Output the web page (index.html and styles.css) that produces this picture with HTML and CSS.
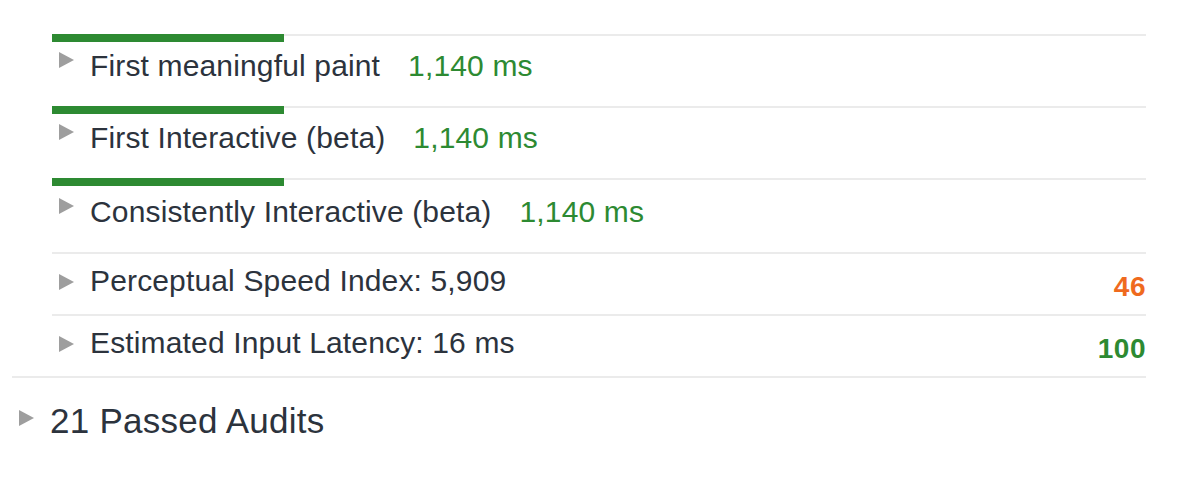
FILE: index.html
```html
<!DOCTYPE html>
<html lang="en">
<head>
<meta charset="utf-8">
<title>Audits</title>
<link rel="stylesheet" href="styles.css">
</head>
<body>
<div class="page">
  <div class="group">
    <div class="audit audit--bar">
      <div class="bar"></div>
      <div class="audit__line">
        <svg class="tri" width="15" height="16" viewBox="0 0 15 16"><polygon points="0,0 15,8 0,16"/></svg>
        <span class="audit__title">First meaningful paint</span>
        <span class="audit__value">1,140 ms</span>
      </div>
    </div>
    <div class="audit audit--bar">
      <div class="bar"></div>
      <div class="audit__line">
        <svg class="tri" width="15" height="16" viewBox="0 0 15 16"><polygon points="0,0 15,8 0,16"/></svg>
        <span class="audit__title">First Interactive (beta)</span>
        <span class="audit__value">1,140 ms</span>
      </div>
    </div>
    <div class="audit audit--bar audit--tall">
      <div class="bar"></div>
      <div class="audit__line">
        <svg class="tri" width="15" height="16" viewBox="0 0 15 16"><polygon points="0,0 15,8 0,16"/></svg>
        <span class="audit__title">Consistently Interactive (beta)</span>
        <span class="audit__value">1,140 ms</span>
      </div>
    </div>
    <div class="audit audit--plain">
      <div class="audit__line">
        <svg class="tri" width="15" height="16" viewBox="0 0 15 16"><polygon points="0,0 15,8 0,16"/></svg>
        <span class="audit__title">Perceptual Speed Index: 5,909</span>
        <span class="score score--average">46</span>
      </div>
    </div>
    <div class="audit audit--plain">
      <div class="audit__line">
        <svg class="tri" width="15" height="16" viewBox="0 0 15 16"><polygon points="0,0 15,8 0,16"/></svg>
        <span class="audit__title">Estimated Input Latency: 16 ms</span>
        <span class="score score--pass">100</span>
      </div>
    </div>
  </div>
  <div class="passed">
    <svg class="tri tri--passed" width="15" height="16" viewBox="0 0 15 16"><polygon points="0,0 15,8 0,16"/></svg>
    <span class="passed__title">21 Passed Audits</span>
  </div>
</div>
</body>
</html>
```
FILE: styles.css
```css
html, body {
  margin: 0;
  padding: 0;
  background: #ffffff;
}

body {
  font-family: "Liberation Sans", Arial, Helvetica, sans-serif;
  color: #2c333d;
}

.page {
  padding-top: 34px;
  width: 1134px;
  margin-left: 12px;
}

.group {
  border-bottom: 2px solid #ebebeb;
}

.audit {
  margin-left: 40px;
  border-top: 2px solid #ebebeb;
}

.bar {
  width: 232px;
  height: 8px;
  margin-top: -2px;
  background: #2d8a32;
}

.audit__line {
  display: flex;
  align-items: flex-start;
  padding-left: 7px;
  font-size: 30px;
  line-height: 36px;
  letter-spacing: 0.15px;
}

.audit--bar .audit__line {
  padding-top: 6px;
  padding-bottom: 22px;
}

.audit--tall .audit__line {
  padding-top: 8px;
}

.audit--plain .audit__line {
  padding-top: 9px;
  padding-bottom: 15px;
}

.tri {
  flex: none;
  margin-top: 4px;
  margin-right: 16px;
  fill: #9e9e9e;
}

.audit--plain .tri {
  margin-top: 11px;
}

.audit__title {
  white-space: nowrap;
}

.audit__value {
  margin-left: 28px;
  color: #2d8a32;
  white-space: nowrap;
}

.score {
  margin-left: auto;
  margin-top: 6px;
  margin-bottom: -6px;
  font-size: 28px;
  font-weight: bold;
  letter-spacing: 0.5px;
}

.score--average {
  color: #ef6a1e;
}

.score--pass {
  color: #2d8a32;
}

.passed {
  display: flex;
  align-items: flex-start;
  margin-top: 23px;
  padding-left: 7px;
  font-size: 35px;
  line-height: 40px;
  letter-spacing: 0.25px;
}

.tri--passed {
  margin-top: 9px;
  margin-right: 16px;
}
```
